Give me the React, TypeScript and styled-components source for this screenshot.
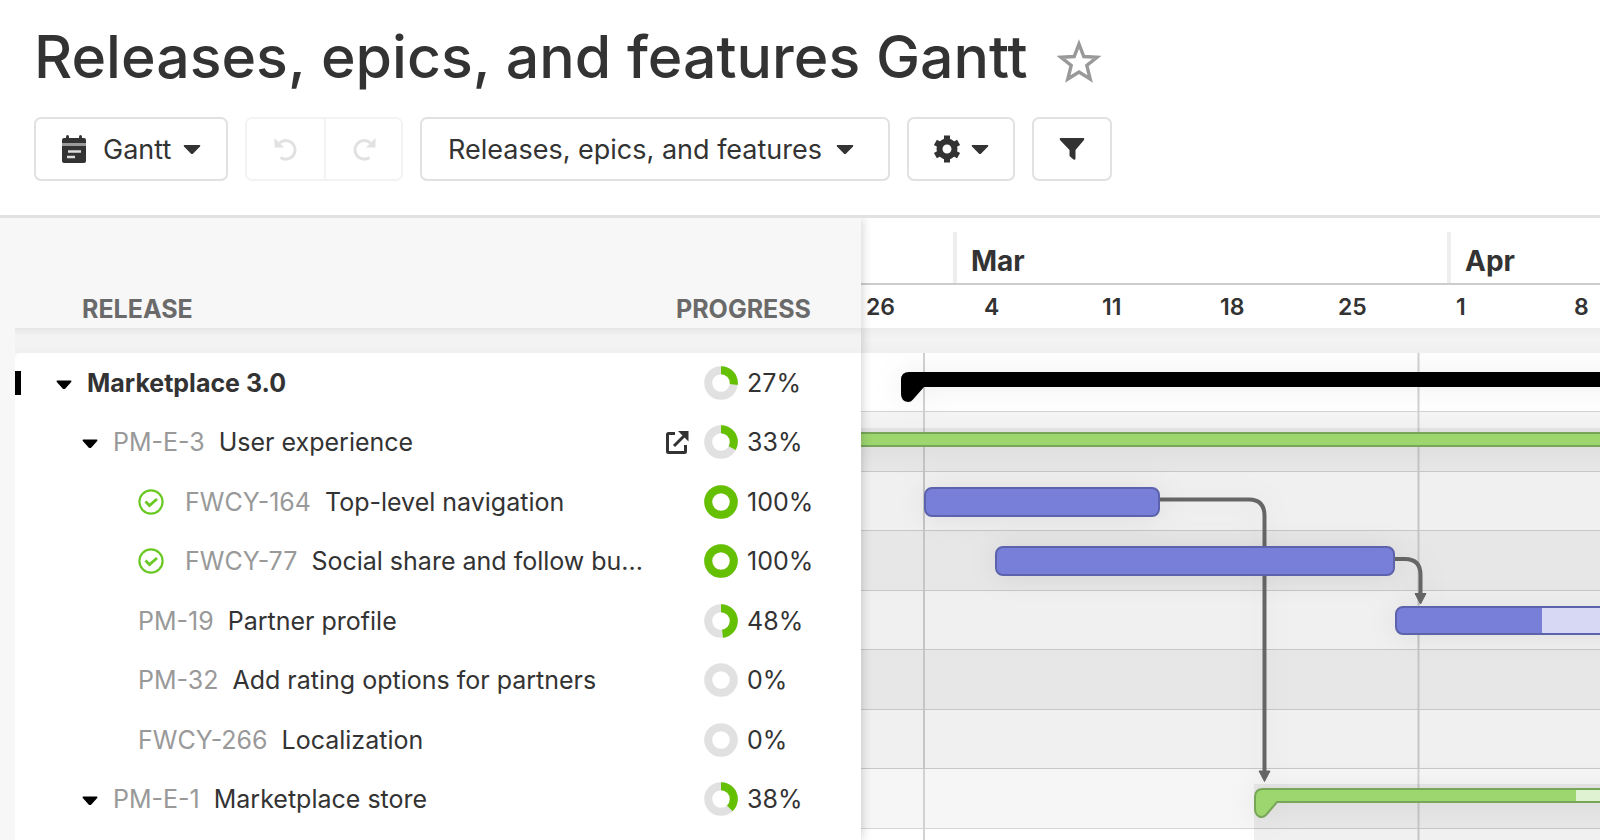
import React from "react";
import styled, { createGlobalStyle } from "styled-components";

const font = `Inter, "Liberation Sans", sans-serif`;

const GlobalStyle = createGlobalStyle`
  *, *::before, *::after { box-sizing: border-box; }
  html, body { margin: 0; background: #fff; }
  body { font-family: ${font}; color: #333; font-size: 25px; }
  button { font: inherit; color: inherit; margin: 0; cursor: pointer; }
  svg { display: block; flex: none; }
`;

const Page = styled.main`
  min-height: 100vh;
  display: flex;
  flex-direction: column;
  overflow: hidden;
`;

const Top = styled.header`
  padding: 22px 34px 34px;
  border-bottom: 3px solid #e1e1e1;
`;

const TitleRow = styled.div`
  display: flex;
  align-items: center;
  gap: 29px;
  height: 70px;
`;

const Title = styled.h1`
  margin: 0;
  font-size: 59px;
  line-height: 70px;
  font-weight: 500;
  white-space: nowrap;
`;

const IconButton = styled.button`
  display: flex;
  padding: 8px 0 0;
  border: 0;
  background: none;
  color: #999;
`;

const Toolbar = styled.div`
  display: flex;
  gap: 17px;
  margin-top: 25px;
  font-size: 27px;
`;

const ToolButton = styled.button<{ $width: number; $start?: boolean }>`
  display: flex;
  align-items: center;
  justify-content: ${(p) => (p.$start ? "flex-start" : "center")};
  gap: 10px;
  width: ${(p) => p.$width}px;
  height: 64px;
  padding: 0 ${(p) => (p.$start ? 25 : 0)}px;
  background: #fff;
  border: 2px solid #e1e1e1;
  border-radius: 7px;
  white-space: nowrap;
`;

const ViewLabel = styled.span`
  margin: 0 2px 0 6px;
`;

const ScopeLabel = styled.span`
  margin: 0 4px 0 1px;
`;

const History = styled.div`
  display: flex;
  border: 2px solid #f3f3f3;
  border-radius: 7px;
`;

const HistoryButton = styled.button`
  display: flex;
  align-items: center;
  justify-content: center;
  width: 77px;
  height: 60px;
  padding: 0;
  border: 0;
  background: none;
  color: #e1e1e1;
  & + & { border-left: 2px solid #f3f3f3; }
`;

const Board = styled.section`
  flex: 1;
  display: flex;
  background: #f7f7f7;
`;

const ListPane = styled.div`
  width: 861px;
  flex: none;
  padding-left: 15px;
  display: flex;
  flex-direction: column;
  position: relative;
  z-index: 1;
  box-shadow: 1px 0 10px rgba(0, 0, 0, 0.18);
  clip-path: inset(0 -16px 0 0);
`;

const ListTable = styled.table`
  width: 100%;
  border-collapse: separate;
  border-spacing: 0;
  table-layout: fixed;
  tbody tr:nth-child(odd) td { height: 59px; }
  tbody tr:nth-child(even) td { height: 60px; }
  tbody tr:first-child td:first-child { border-top-left-radius: 6px; }
`;

const ProgressCol = styled.col`
  width: 198px;
`;

const HeadCell = styled.th<{ $pad: number }>`
  height: 110px;
  padding: 0 0 4px ${(p) => p.$pad}px;
  vertical-align: bottom;
  text-align: left;
  font-size: 25px;
  line-height: 30px;
  font-weight: 700;
  color: #6a6a6a;
`;

const Cell = styled.td`
  padding: 0;
  background: #fff;
`;

const Gap = styled.div`
  height: 25px;
  background: linear-gradient(#e6e6e6, #f3f3f3 8px, #f3f3f3 17px, #efefef);
`;

const TimelineGap = styled(Gap)`
  background: linear-gradient(#ededed, #f3f3f3 12px, #efefef);
`;

const GapCell = styled.td`
  padding: 0;
`;

const NameLine = styled.div<{ $indent: number }>`
  display: flex;
  align-items: center;
  padding-left: ${(p) => p.$indent}px;
  white-space: nowrap;
`;

const Marker = styled.span`
  width: 6px;
  height: 24px;
  margin-right: 35px;
  background: #000;
`;

const Toggle = styled.button`
  display: flex;
  width: 31px;
  padding: 4px 0 0;
  border: 0;
  background: none;
  color: #000;
`;

const Done = styled.span`
  display: flex;
  width: 47px;
`;

const ItemId = styled.span`
  margin-right: 14px;
  color: #999;
`;

const ItemName = styled.span<{ $bold?: boolean }>`
  font-weight: ${(p) => (p.$bold ? 700 : 400)};
`;

const ProgressLine = styled.div`
  display: flex;
  align-items: center;
  gap: 9px;
`;

const LinkSlot = styled.span`
  width: 32px;
  flex: none;
`;

const OpenLink = styled.a`
  display: flex;
  color: #333;
`;

const ListRest = styled.div`
  flex: 1;
  background: #fff;
`;

const Timeline = styled.div`
  flex: 1;
  min-width: 0;
  display: flex;
  flex-direction: column;
  overflow: hidden;
  background: #fff;
`;

const Months = styled.div`
  display: flex;
  height: 67px;
  padding: 14px 0 0 92px;
  border-bottom: 2px solid #ccc;
`;

const Month = styled.div`
  width: 494px;
  flex: none;
  padding-left: 14px;
  border-left: 4px solid #eee;
  font-size: 28px;
  line-height: 58px;
  font-weight: 700;
`;

const Weeks = styled.div`
  display: flex;
  height: 43px;
  padding-left: 5px;
`;

const Week = styled.div`
  width: 118px;
  flex: none;
  font-size: 23px;
  line-height: 44px;
  font-weight: 600;
`;

const Chart = styled.div`
  position: relative;
  flex: 1;
  display: flex;
  flex-direction: column;
`;

const Band = styled.div`
  height: 59px;
  border-bottom: 1px solid #d4d4d4;
  background: #fff;
  &:nth-child(even) { height: 60px; background: #f6f6f6; }
`;

const Drawing = styled.svg`
  position: absolute;
  inset: 0;
  width: 100%;
  height: 100%;
  overflow: hidden;
`;

const Glow = styled.g`
  filter: drop-shadow(0 1px 14px rgba(0, 0, 0, 0.08));
`;

const Caret = () => (
  <svg width="18" height="11" viewBox="0 0 18 11" fill="currentColor" aria-hidden="true">
    <path d="M1.500 1H16.500Q18 1.300 17 2.600L10.200 9.400Q9 10.500 7.800 9.400L1 2.600Q0 1.300 1.500 1Z" />
  </svg>
);

const RowCaret = () => (
  <svg width="16" height="10" viewBox="0 0 16 10" fill="currentColor" aria-hidden="true">
    <path d="M1.200 .5H14.800Q16 .8 15.200 2L9.400 8.400Q8 9.500 6.600 8.400L.8 2Q0 .8 1.200 .5Z" />
  </svg>
);

const Donut = ({ value }: { value: number }) => (
  <svg width="34" height="34" viewBox="0 0 34 34" fill="none" strokeWidth="8" aria-hidden="true">
    <circle cx="17" cy="17" r="12.800" stroke="#e1e1e1" />
    {value > 0 && (
      <circle cx="17" cy="17" r="12.800" stroke="#64c000" pathLength={100} strokeDasharray={`${value} 100`} transform="rotate(-90 17 17)" />
    )}
  </svg>
);

type Item = {
  id?: string;
  name: string;
  value: number;
  kind: "release" | "epic" | "done" | "feature";
  link?: boolean;
};

const items: Item[] = [
  { name: "Marketplace 3.0", value: 27, kind: "release" },
  { id: "PM-E-3", name: "User experience", value: 33, kind: "epic", link: true },
  { id: "FWCY-164", name: "Top-level navigation", value: 100, kind: "done" },
  { id: "FWCY-77", name: "Social share and follow bu...", value: 100, kind: "done" },
  { id: "PM-19", name: "Partner profile", value: 48, kind: "feature" },
  { id: "PM-32", name: "Add rating options for partners", value: 0, kind: "feature" },
  { id: "FWCY-266", name: "Localization", value: 0, kind: "feature" },
  { id: "PM-E-1", name: "Marketplace store", value: 38, kind: "epic" },
];

const indents = { release: 0, epic: 67, done: 123, feature: 123 };

function ItemRow({ item }: { item: Item }) {
  const { kind } = item;
  return (
    <tr>
      <Cell>
        <NameLine $indent={indents[kind]}>
          {kind === "release" && <Marker />}
          {(kind === "release" || kind === "epic") && (
            <Toggle aria-label={`Collapse ${item.name}`}><RowCaret /></Toggle>
          )}
          {kind === "done" && (
            <Done>
              <svg width="26" height="26" viewBox="0 0 26 26" fill="none" stroke="#69c822" aria-label="Done" role="img">
                <circle cx="13" cy="13" r="11.600" strokeWidth="2.200" />
                <path d="M7.500 12.500l4 4 7.500-6.500" strokeWidth="2.800" />
              </svg>
            </Done>
          )}
          {item.id && <ItemId>{item.id}</ItemId>}
          <ItemName $bold={kind === "release"}>{item.name}</ItemName>
        </NameLine>
      </Cell>
      <Cell>
        <ProgressLine>
          <LinkSlot>
            {item.link && (
              <OpenLink href="#epic" aria-label={`Open ${item.name}`}>
                <svg width="28" height="28" viewBox="0 0 28 28" fill="none" stroke="currentColor" strokeWidth="3" aria-hidden="true">
                  <path d="M12 5.500H5.500Q4.500 5.500 4.500 6.500V23.500Q4.500 24.500 5.500 24.500H21.500Q22.500 24.500 22.500 23.500V17" />
                  <path d="M11 18L22 7" />
                  <path d="M15 3H25.500V13.500Z" fill="currentColor" stroke="none" />
                </svg>
              </OpenLink>
            )}
          </LinkSlot>
          <Donut value={item.value} />
          {item.value}%
        </ProgressLine>
      </Cell>
    </tr>
  );
}

const months = ["Mar", "Apr"];
const weeks = ["26", "4", "11", "18", "25", "1", "8"];

const FAR = 4000;

function Schedule() {
  return (
    <Drawing role="img" aria-label="Schedule">
      <g stroke="#d2d2d2" strokeWidth="2">
        <path d="M63 0V2000M557.500 0V2000" />
      </g>
      <g fill="#000" fillOpacity=".06">
        <rect x="0" y="75" width={FAR} height="341" />
        <rect x="393" y="431" width={FAR} height="600" />
      </g>
      <Glow fill="none" stroke="#666" strokeWidth="4">
        <path d="M299 146.500H388Q403.500 146.500 403.500 163V420" />
        <path d="M398 418H409L403.500 428.500Z" fill="#666" strokeWidth="1" />
        <path d="M534 206H544Q559.500 206 559.500 222V242" />
        <path d="M554 240.500H565L559.500 251Z" fill="#666" strokeWidth="1" />
      </Glow>
      <Glow>
        <path d={`M48 19H${FAR}V34H63L52 46.500Q50 49 47 49Q40 48 40 41V27Q40 19 48 19Z`} fill="#000" />
      </Glow>
      <Glow strokeWidth="2">
        <rect x="-20" y="80" width={FAR} height="13" fill="#9dd66e" stroke="#78a659" />
        <rect x="64" y="135" width="234" height="28" rx="7" fill="#777fd9" stroke="#5c63ac" />
        <rect x="135" y="194" width="398" height="28" rx="7" fill="#777fd9" stroke="#5c63ac" />
        <rect x="535" y="254" width={FAR} height="27" rx="7" fill="#d7d9f4" />
        <path d="M542 254H681V281H542Q535 281 535 274V261Q535 254 542 254Z" fill="#777fd9" />
        <rect x="535" y="254" width={FAR} height="27" rx="7" fill="none" stroke="#5c63ac" />
        <path d={`M402 436H${FAR}V449H416L405 462Q402 465 398 463.500Q394 461 394 456V444Q394 436 402 436Z`} fill="#9dd66e" stroke="#78a659" />
        <rect x="715" y="437" width={FAR} height="11" fill="#dff2d2" />
      </Glow>
    </Drawing>
  );
}

export default function App() {
  return (
    <Page>
      <GlobalStyle />
      <Top>
        <TitleRow>
          <Title>Releases, epics, and features Gantt</Title>
          <IconButton aria-label="Add to favorites">
            <svg width="44" height="44" viewBox="0 0 44 44" fill="none" stroke="currentColor" strokeWidth="3.400">
              <path d="M22 5L26.800 17.500L40 18.200L29.800 26.500L33.200 40L22 33L10.800 40L14.200 26.500L4 18.200L17.200 17.500Z" />
            </svg>
          </IconButton>
        </TitleRow>
        <Toolbar>
          <ToolButton $width={194} $start>
            <svg width="26" height="29" viewBox="0 0 26 29" aria-hidden="true">
              <path fill="#333" d="M5 2q0-2 1.500-2T8 2v1h10V2q0-2 1.500-2T21 2v1h2q2 0 2 2v3H1V5q0-2 2-2h2z" />
              <path fill="#333" d="M1 11h24v15q0 2-2 2H3q-2 0-2-2z" />
              <path stroke="#999" strokeWidth="3" d="M1 9.500h24" />
              <path stroke="#ddd" strokeWidth="2.600" d="M7 16.500h13M6 22h8" />
            </svg>
            <ViewLabel>Gantt</ViewLabel>
            <Caret />
          </ToolButton>
          <History>
            <HistoryButton disabled aria-label="Undo">
              <svg width="26" height="26" viewBox="0 0 26 26" fill="none" stroke="currentColor" strokeWidth="3">
                <path d="M6.500 7A9.300 9.300 0 1 1 7.500 21.500" />
                <path d="M1.500 2L5 5.500L11 11.500H1.500Z" fill="currentColor" stroke="none" />
              </svg>
            </HistoryButton>
            <HistoryButton disabled aria-label="Redo">
              <svg width="26" height="26" viewBox="0 0 26 26" fill="none" stroke="currentColor" strokeWidth="3">
                <path d="M19.500 7A9.300 9.300 0 1 0 18.500 21.500" />
                <path d="M24.500 2L21 5.500L15 11.500H24.500Z" fill="currentColor" stroke="none" />
              </svg>
            </HistoryButton>
          </History>
          <ToolButton $width={470} $start>
            <ScopeLabel>Releases, epics, and features</ScopeLabel>
            <Caret />
          </ToolButton>
          <ToolButton $width={108} aria-label="Settings">
            <svg width="28" height="28" viewBox="0 0 28 28" fill="none" stroke="#333" aria-hidden="true">
              <circle cx="14" cy="14" r="7.500" strokeWidth="6" />
              <path d="M14 .5v5M14 22.500v5M2.400 7.300l4 2.300M21.600 18.400l4 2.300M2.400 20.700l4-2.300M21.600 9.600l4-2.300" strokeWidth="6" />
            </svg>
            <Caret />
          </ToolButton>
          <ToolButton $width={80} aria-label="Filter">
            <svg width="26" height="24" viewBox="0 0 26 24" fill="#333" aria-hidden="true">
              <path d="M1.500 1H24.500Q26 1.500 25 3L16.500 13V21.500Q16 23.500 14.500 22.500L11 19.500Q10.500 19 10.500 18V13L1 3Q0 1.500 1.500 1Z" />
            </svg>
          </ToolButton>
        </Toolbar>
      </Top>
      <Board>
        <ListPane>
          <ListTable>
            <colgroup><col /><ProgressCol /></colgroup>
            <thead>
              <tr>
                <HeadCell $pad={67}>RELEASE</HeadCell>
                <HeadCell $pad={13}>PROGRESS</HeadCell>
              </tr>
              <tr><GapCell colSpan={2}><Gap /></GapCell></tr>
            </thead>
            <tbody>
              {items.map((item) => <ItemRow key={item.name} item={item} />)}
            </tbody>
          </ListTable>
          <ListRest />
        </ListPane>
        <Timeline>
          <Months>{months.map((m) => <Month key={m}>{m}</Month>)}</Months>
          <Weeks>{weeks.map((w) => <Week key={w}>{w}</Week>)}</Weeks>
          <TimelineGap />
          <Chart>
            {items.map((item) => <Band key={item.name} />)}
            <Schedule />
          </Chart>
        </Timeline>
      </Board>
    </Page>
  );
}
